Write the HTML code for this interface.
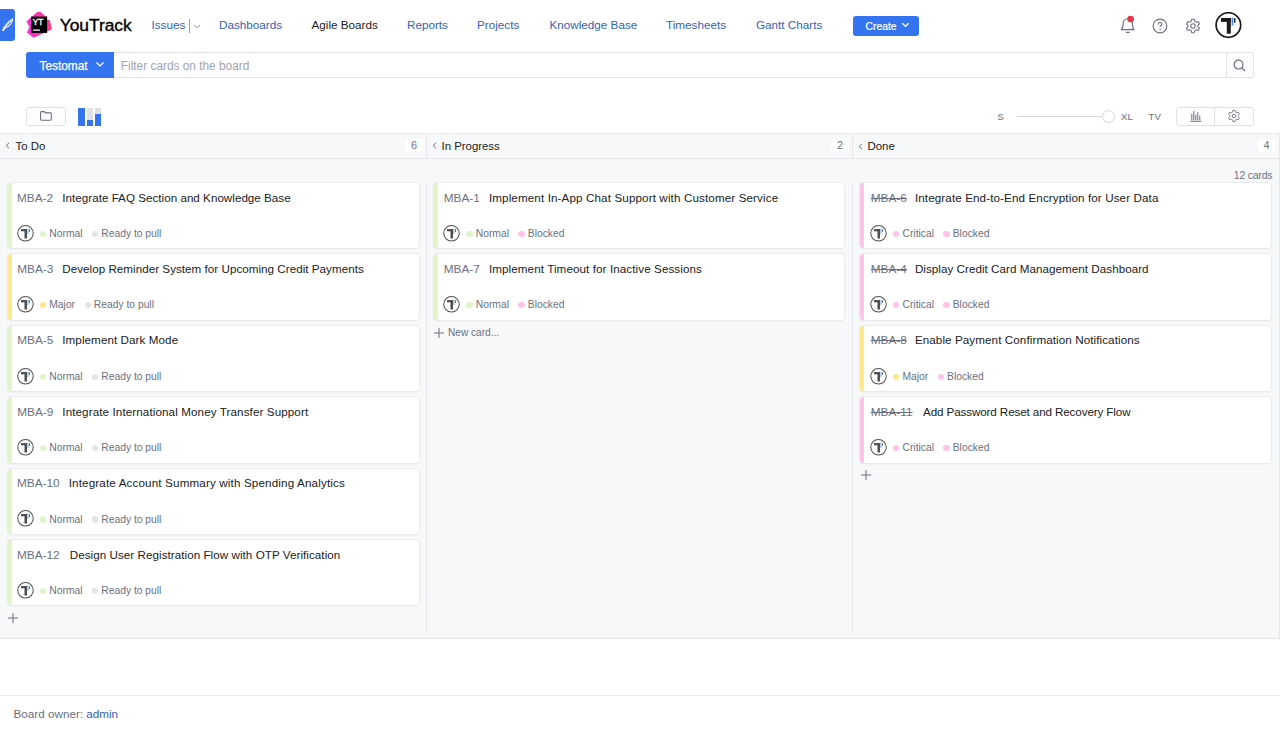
<!DOCTYPE html>
<html><head><meta charset="utf-8">
<style>
*{box-sizing:border-box;margin:0;padding:0}
html,body{width:1280px;height:734px;overflow:hidden;background:#fff;font-family:"Liberation Sans",sans-serif;color:#1f2023}
.abs{position:absolute}
.nav{position:absolute;top:17px;font-size:11.7px;line-height:16px;color:#3462b4;white-space:nowrap}
.btn-blue{background:#3574f0;color:#fff}
#board{position:absolute;left:0;top:133px;width:1280px;height:506px;background:#f7f8fa;border-top:1px solid #ebecf0;border-bottom:1px solid #e4e6ea}
.colhead{position:absolute;top:0;height:25px;border-bottom:1px solid #e4e6ea}
.sep{position:absolute;width:1px;background:#e6e7eb}
.card{position:absolute;width:410.6px;height:65.4px;background:#fff;border-radius:3.5px;box-shadow:0 0 0 1px #e9eaee,0 1px 2px rgba(0,0,0,.08);overflow:hidden}
.card .bar{position:absolute;left:0;top:0;bottom:0;width:4px}
.card .id{position:absolute;top:6.5px;line-height:16px;white-space:nowrap;font-size:11.8px;color:#6c7080}
.card .title{position:absolute;top:6.5px;line-height:16px;white-space:nowrap;font-size:11.65px;color:#202124}
.card .meta{position:absolute;top:44px;left:32px;font-size:10.3px;line-height:14px;color:#6c7080;white-space:nowrap}
.chev{position:absolute;top:8.5px}
.ctitle{position:absolute;top:4px;font-size:11.4px;line-height:16px;color:#202124;white-space:nowrap}
.badge{position:absolute;top:5.2px;width:18px;height:13px;background:#fff;border-radius:2px;font-size:10.9px;line-height:12.4px;text-align:center;color:#6c7080}
.plus{position:absolute;width:10px;height:10px}
.dot{display:inline-block;width:6.3px;height:6.3px;border-radius:50%;margin-right:3px;vertical-align:0px}
.av{position:absolute;left:9px;top:41.9px;width:17px;height:17px}
.g{background:#e0f3c9}.y{background:#fee58c}.p{background:#fec4e8}.gr{background:#e3e4e7}
.bg{background:#e3f4cb}.by{background:#ffe98c}.bp{background:#ffc3e6}
</style></head><body>

<!-- left blue tab -->
<div class="abs" style="left:-4px;top:9px;width:19px;height:32px;background:#3574f0;border-radius:3px"></div>
<svg class="abs" style="left:0;top:16px" width="15" height="18" viewBox="0 0 15 18">
 <path d="M2.6 14.4 C4 11.5 7.5 6 12.6 2.9 C13 6 10 10.5 5.2 11.6 L3.2 14.6 Z" fill="none" stroke="#fff" stroke-width="1.1" stroke-linejoin="round"/>
 <path d="M3.4 13.2 L11.5 4.5" stroke="#fff" stroke-width="0.9"/>
</svg>

<!-- YT logo -->
<svg class="abs" style="left:24px;top:10px" width="30" height="30" viewBox="0 0 30 30">
 <defs><linearGradient id="lg" x1="0" y1="0" x2="1" y2="0"><stop offset="0" stop-color="#f72fe0"/><stop offset="1" stop-color="#ff3a7e"/></linearGradient></defs>
 <path d="M2.4 11.5 L12 3 C13.6 1.6 16.2 1.4 18 3 L21.5 6.6 L23.1 6.6 L23.1 9.7 L25.7 9.7 L28 19.3 L9.6 27.8 L2.9 22.4 L5.5 16.7 Z" fill="url(#lg)"/>
 <rect x="7" y="6.6" width="16.1" height="16.3" fill="#000"/>
 <text x="8.5" y="15.2" font-family="Liberation Sans" font-size="9" fill="#fff" stroke="#fff" stroke-width="0.3" letter-spacing="-0.5">YT</text>
 <rect x="9.1" y="19.5" width="6.8" height="1.3" fill="#fff"/>
</svg>
<div class="abs" style="left:59.8px;top:14px;font-size:17.4px;line-height:22px;color:#000;-webkit-text-stroke:0.35px #000;letter-spacing:-0.05px;white-space:nowrap">YouTrack</div>

<div class="nav" style="left:151.5px">Issues</div>
<div class="abs" style="left:189px;top:19.4px;width:1px;height:14px;background:#9a9da6"></div>
<svg class="abs" style="left:193px;top:24.2px" width="8" height="5" viewBox="0 0 8 5"><path d="M1 1 L4 3.8 L7 1" fill="none" stroke="#9a9da6" stroke-width="1"/></svg>
<div class="nav" style="left:219px">Dashboards</div>
<div class="nav" style="left:311.5px;color:#1f2023">Agile Boards</div>
<div class="nav" style="left:407px">Reports</div>
<div class="nav" style="left:477px">Projects</div>
<div class="nav" style="left:549.5px">Knowledge Base</div>
<div class="nav" style="left:666px">Timesheets</div>
<div class="nav" style="left:756px">Gantt Charts</div>
<div class="abs btn-blue" style="left:852.5px;top:16px;width:66px;height:19.5px;border-radius:3px"></div>
<div class="abs" style="left:865.6px;top:19px;font-size:10.3px;line-height:16px;color:#fff;-webkit-text-stroke:0.2px #fff">Create</div>
<svg class="abs" style="left:901px;top:22.3px" width="9" height="6" viewBox="0 0 9 6"><path d="M1.2 1.2 L4.5 4.3 L7.8 1.2" fill="none" stroke="#fff" stroke-width="1.3"/></svg>

<!-- right header icons -->
<svg class="abs" style="left:1118px;top:14px" width="20" height="22" viewBox="0 0 20 22">
 <path d="M3.4 15.6 H16.1 C15.1 14.6 14.4 13 14.4 10.2 V9.6 C14.4 6.6 12.5 4.7 9.75 4.7 C7 4.7 5.1 6.6 5.1 9.6 V10.2 C5.1 13 4.4 14.6 3.4 15.6 Z" fill="none" stroke="#6c7080" stroke-width="1.15" stroke-linejoin="round"/>
 <path d="M8.3 18.3 H11.2" stroke="#6c7080" stroke-width="1.15" stroke-linecap="round"/>
 <circle cx="12.6" cy="5" r="3.35" fill="#e5364a"/>
</svg>
<svg class="abs" style="left:1151.2px;top:16.7px" width="18" height="18" viewBox="0 0 18 18">
 <circle cx="9" cy="9" r="6.85" fill="none" stroke="#6c7080" stroke-width="1.15"/>
 <path d="M7.1 7.4 C7.1 6.2 8 5.5 9 5.5 C10.1 5.5 10.9 6.2 10.9 7.2 C10.9 8.5 9.1 8.6 9.1 10.1" fill="none" stroke="#6c7080" stroke-width="1.15"/>
 <circle cx="9.1" cy="12.2" r="0.75" fill="#6c7080"/>
</svg>
<svg class="abs" style="left:1183.7px;top:16.8px" width="18" height="18" viewBox="0 0 18 18">
 <g transform="translate(9 9) scale(0.93) translate(-9 -9)">
 <path id="gearp" d="M7.6 1.8 H10.4 L10.9 4 L12.5 4.9 L14.6 4.2 L16 6.6 L14.4 8.1 V9.9 L16 11.4 L14.6 13.8 L12.5 13.1 L10.9 14 L10.4 16.2 H7.6 L7.1 14 L5.5 13.1 L3.4 13.8 L2 11.4 L3.6 9.9 V8.1 L2 6.6 L3.4 4.2 L5.5 4.9 L7.1 4 Z" fill="none" stroke="#6c7080" stroke-width="1.15" stroke-linejoin="round"/>
 <circle cx="9" cy="9" r="2.4" fill="none" stroke="#6c7080" stroke-width="1.15"/>
 </g>
</svg>
<svg class="abs" style="left:1215px;top:12px" width="27" height="27" viewBox="0 0 27 27">
 <circle cx="13.4" cy="13" r="12.3" fill="#fff" stroke="#1a1a1a" stroke-width="1.7"/>
 <rect x="6" y="6" width="10" height="3.9" fill="#1a1a1a"/>
 <rect x="11.8" y="6" width="4" height="15.7" fill="#1a1a1a"/>
 <rect x="16.6" y="5.6" width="1.8" height="7.9" fill="#4d86f5"/>
 <rect x="19.1" y="6.1" width="1.4" height="4.6" fill="#1a1a1a"/>
</svg>

<!-- search row -->
<div class="abs btn-blue" style="left:26px;top:52.4px;width:88.2px;height:25.4px;border-radius:3px 0 0 3px"></div>
<div class="abs" style="left:39.5px;top:58px;font-size:11.85px;line-height:16px;color:#fff;-webkit-text-stroke:0.25px #fff">Testomat</div>
<svg class="abs" style="left:95px;top:61px" width="10" height="7" viewBox="0 0 10 7"><path d="M1.5 1.5 L5 5 L8.5 1.5" fill="none" stroke="#fff" stroke-width="1.2"/></svg>
<div class="abs" style="left:114px;top:52px;width:1139.6px;height:26px;border:1px solid #e0e2e7;border-left:none;border-radius:0 3px 3px 0"></div>
<div class="abs" style="left:1226px;top:53px;width:1px;height:24px;background:#e0e2e7"></div>
<div class="abs" style="left:120.8px;top:57.5px;font-size:11.87px;line-height:16px;color:#a0a4b0">Filter cards on the board</div>
<svg class="abs" style="left:1232px;top:58px" width="15" height="15" viewBox="0 0 15 15">
 <circle cx="6.6" cy="6.6" r="4.4" fill="none" stroke="#6c7080" stroke-width="1.2"/>
 <path d="M9.8 9.8 L13 13" stroke="#6c7080" stroke-width="1.3"/>
</svg>

<!-- toolbar -->
<div class="abs" style="left:26px;top:107px;width:39.5px;height:19px;border:1px solid #dfe1e5;border-radius:3px"></div>
<svg class="abs" style="left:39px;top:110px" width="14" height="12" viewBox="0 0 14 12">
 <path d="M1.6 2.5 C1.6 2 2 1.6 2.5 1.6 H5.3 L6.5 2.9 H11.4 C11.9 2.9 12.3 3.3 12.3 3.8 V9.3 C12.3 9.8 11.9 10.2 11.4 10.2 H2.5 C2 10.2 1.6 9.8 1.6 9.3 Z" fill="none" stroke="#6c7080" stroke-width="1.1"/>
</svg>
<div class="abs" style="left:78px;top:108px;width:7px;height:18px;background:#3574f0"></div>
<div class="abs" style="left:86.5px;top:108px;width:6.5px;height:11.5px;background:#dfe1e5"></div>
<div class="abs" style="left:86.5px;top:119.5px;width:6.5px;height:6.5px;background:#3574f0"></div>
<div class="abs" style="left:94.8px;top:108px;width:6.7px;height:6px;background:#dfe1e5"></div>
<div class="abs" style="left:94.8px;top:114px;width:6.7px;height:12px;background:#3574f0"></div>

<div class="abs" style="left:997.5px;top:109.6px;font-size:9.6px;line-height:14px;color:#6c7080">S</div>
<div class="abs" style="left:1017px;top:116px;width:86px;height:1px;background:#d5d7dc"></div>
<div class="abs" style="left:1101.5px;top:110.2px;width:13px;height:13px;border-radius:50%;background:#fff;border:1px solid #d3d5db"></div>
<div class="abs" style="left:1121px;top:109.6px;font-size:9.6px;line-height:14px;color:#6c7080">XL</div>
<div class="abs" style="left:1148.6px;top:109.6px;font-size:9.6px;line-height:14px;color:#6c7080">TV</div>
<div class="abs" style="left:1176px;top:107px;width:77.5px;height:19px;border:1px solid #dfe1e5;border-radius:3px"></div>
<div class="abs" style="left:1214px;top:107px;width:1px;height:19px;background:#dfe1e5"></div>
<svg class="abs" style="left:1189px;top:110px" width="13" height="13" viewBox="0 0 13 13">
 <path d="M1.3 11.3 H12.3 M2.8 10.2 V4 M4.8 10.2 V1 M6.8 10.2 V4.8 M8.8 10.2 V2.2 M10.8 10.2 V5.8" stroke="#6c7080" stroke-width="1"/>
</svg>
<svg class="abs" style="left:1227px;top:109px" width="14" height="14" viewBox="0 0 18 18">
 <use href="#gearp"/>
 <circle cx="9" cy="9" r="2.3" fill="none" stroke="#6c7080" stroke-width="1.1"/>
</svg>

<!-- board -->
<div id="board">
 <div class="colhead" style="left:0;width:426px"></div>
 <div class="colhead" style="left:426px;width:426.5px;border-left:1px solid #e6e7eb"></div>
 <div class="colhead" style="left:852px;width:427px;border-left:1px solid #e6e7eb"></div>
 <svg class="chev" style="left:5.3px;top:8px" width="5" height="7" viewBox="0 0 5 7"><path d="M4 0.8 L1.2 3.5 L4 6.2" fill="none" stroke="#6c7080" stroke-width="1"/></svg>
 <div class="ctitle" style="left:15.5px">To Do</div>
 <div class="badge" style="left:405px">6</div>
 <svg class="chev" style="left:431.5px;top:8px" width="5" height="7" viewBox="0 0 5 7"><path d="M4 0.8 L1.2 3.5 L4 6.2" fill="none" stroke="#6c7080" stroke-width="1"/></svg>
 <div class="ctitle" style="left:441.5px">In Progress</div>
 <div class="badge" style="left:831px">2</div>
 <svg class="chev" style="left:857.5px" width="5" height="7" viewBox="0 0 5 7"><path d="M4 0.8 L1.2 3.5 L4 6.2" fill="none" stroke="#6c7080" stroke-width="1"/></svg>
 <div class="ctitle" style="left:867.5px">Done</div>
 <div class="badge" style="left:1257.5px">4</div>
 <div class="abs" style="left:1233.8px;top:34.7px;font-size:10.4px;letter-spacing:-0.17px;line-height:14px;color:#6c7080;white-space:nowrap">12 cards</div>
 <div class="sep" style="left:426px;top:48.5px;height:448px"></div>
 <div class="sep" style="left:852px;top:48.5px;height:448px"></div>
 <div class="sep" style="left:1278.5px;top:0;height:505px;background:#e6e7eb"></div>
 <svg class="plus" style="left:7.5px;top:478.5px" viewBox="0 0 10 10"><path d="M5 0 V10 M0 5 H10" stroke="#6c7080" stroke-width="1"/></svg>
 <svg class="plus" style="left:434px;top:193.5px" viewBox="0 0 10 10"><path d="M5 0 V10 M0 5 H10" stroke="#6c7080" stroke-width="1"/></svg>
 <div class="abs" style="left:448px;top:191.5px;font-size:10.1px;line-height:14px;color:#6c7080;white-space:nowrap">New card...</div>
 <svg class="plus" style="left:860.5px;top:335.5px" viewBox="0 0 10 10"><path d="M5 0 V10 M0 5 H10" stroke="#6c7080" stroke-width="1"/></svg>
</div>
<div class="card" style="left:8.0px;top:183.0px"><div class="bar bg"></div><span class="id" style="left:9.00px;">MBA-2</span><span class="title" style="left:54.30px;letter-spacing:0.015px">Integrate FAQ Section and Knowledge Base</span><div style="position:absolute;left:0px;top:0;width:200px;height:65px"><svg class="av" viewBox="0 0 17 17"><circle cx="8.5" cy="8.3" r="7.75" fill="#fff" stroke="#505050" stroke-width="1.05"/><rect x="4" y="4.1" width="6" height="2.2" fill="#4e4e4e"/><rect x="7.5" y="4.1" width="2.5" height="9.4" fill="#4e4e4e"/><rect x="10.1" y="3.6" width="1.7" height="5.3" fill="#a9c6fa"/><rect x="12.1" y="4.3" width="0.9" height="2.5" fill="#4e4e4e"/></svg><div class="meta"><span class="dot g"></span>Normal<span class="dot gr" style="margin-left:9.5px"></span>Ready to pull</div></div></div>
<div class="card" style="left:8.0px;top:254.4px"><div class="bar by"></div><span class="id" style="left:9.20px;">MBA-3</span><span class="title" style="left:54.30px;letter-spacing:0.024px">Develop Reminder System for Upcoming Credit Payments</span><div style="position:absolute;left:0px;top:0;width:200px;height:65px"><svg class="av" viewBox="0 0 17 17"><circle cx="8.5" cy="8.3" r="7.75" fill="#fff" stroke="#505050" stroke-width="1.05"/><rect x="4" y="4.1" width="6" height="2.2" fill="#4e4e4e"/><rect x="7.5" y="4.1" width="2.5" height="9.4" fill="#4e4e4e"/><rect x="10.1" y="3.6" width="1.7" height="5.3" fill="#a9c6fa"/><rect x="12.1" y="4.3" width="0.9" height="2.5" fill="#4e4e4e"/></svg><div class="meta"><span class="dot y"></span>Major<span class="dot gr" style="margin-left:9.5px"></span>Ready to pull</div></div></div>
<div class="card" style="left:8.0px;top:325.8px"><div class="bar bg"></div><span class="id" style="left:9.20px;">MBA-5</span><span class="title" style="left:54.30px;letter-spacing:0.072px">Implement Dark Mode</span><div style="position:absolute;left:0px;top:0;width:200px;height:65px"><svg class="av" viewBox="0 0 17 17"><circle cx="8.5" cy="8.3" r="7.75" fill="#fff" stroke="#505050" stroke-width="1.05"/><rect x="4" y="4.1" width="6" height="2.2" fill="#4e4e4e"/><rect x="7.5" y="4.1" width="2.5" height="9.4" fill="#4e4e4e"/><rect x="10.1" y="3.6" width="1.7" height="5.3" fill="#a9c6fa"/><rect x="12.1" y="4.3" width="0.9" height="2.5" fill="#4e4e4e"/></svg><div class="meta"><span class="dot g"></span>Normal<span class="dot gr" style="margin-left:9.5px"></span>Ready to pull</div></div></div>
<div class="card" style="left:8.0px;top:397.2px"><div class="bar bg"></div><span class="id" style="left:9.20px;">MBA-9</span><span class="title" style="left:54.30px;letter-spacing:0.100px">Integrate International Money Transfer Support</span><div style="position:absolute;left:0px;top:0;width:200px;height:65px"><svg class="av" viewBox="0 0 17 17"><circle cx="8.5" cy="8.3" r="7.75" fill="#fff" stroke="#505050" stroke-width="1.05"/><rect x="4" y="4.1" width="6" height="2.2" fill="#4e4e4e"/><rect x="7.5" y="4.1" width="2.5" height="9.4" fill="#4e4e4e"/><rect x="10.1" y="3.6" width="1.7" height="5.3" fill="#a9c6fa"/><rect x="12.1" y="4.3" width="0.9" height="2.5" fill="#4e4e4e"/></svg><div class="meta"><span class="dot g"></span>Normal<span class="dot gr" style="margin-left:9.5px"></span>Ready to pull</div></div></div>
<div class="card" style="left:8.0px;top:468.6px"><div class="bar bg"></div><span class="id" style="left:9.00px;">MBA-10</span><span class="title" style="left:60.70px;letter-spacing:0.144px">Integrate Account Summary with Spending Analytics</span><div style="position:absolute;left:0px;top:0;width:200px;height:65px"><svg class="av" viewBox="0 0 17 17"><circle cx="8.5" cy="8.3" r="7.75" fill="#fff" stroke="#505050" stroke-width="1.05"/><rect x="4" y="4.1" width="6" height="2.2" fill="#4e4e4e"/><rect x="7.5" y="4.1" width="2.5" height="9.4" fill="#4e4e4e"/><rect x="10.1" y="3.6" width="1.7" height="5.3" fill="#a9c6fa"/><rect x="12.1" y="4.3" width="0.9" height="2.5" fill="#4e4e4e"/></svg><div class="meta"><span class="dot g"></span>Normal<span class="dot gr" style="margin-left:9.5px"></span>Ready to pull</div></div></div>
<div class="card" style="left:8.0px;top:540.0px"><div class="bar bg"></div><span class="id" style="left:9.00px;">MBA-12</span><span class="title" style="left:61.70px;letter-spacing:0.046px">Design User Registration Flow with OTP Verification</span><div style="position:absolute;left:0px;top:0;width:200px;height:65px"><svg class="av" viewBox="0 0 17 17"><circle cx="8.5" cy="8.3" r="7.75" fill="#fff" stroke="#505050" stroke-width="1.05"/><rect x="4" y="4.1" width="6" height="2.2" fill="#4e4e4e"/><rect x="7.5" y="4.1" width="2.5" height="9.4" fill="#4e4e4e"/><rect x="10.1" y="3.6" width="1.7" height="5.3" fill="#a9c6fa"/><rect x="12.1" y="4.3" width="0.9" height="2.5" fill="#4e4e4e"/></svg><div class="meta"><span class="dot g"></span>Normal<span class="dot gr" style="margin-left:9.5px"></span>Ready to pull</div></div></div>
<div class="card" style="left:433.8px;top:183.0px"><div class="bar bg"></div><span class="id" style="left:10.00px;">MBA-1</span><span class="title" style="left:55.10px;letter-spacing:0.118px">Implement In-App Chat Support with Customer Service</span><div style="position:absolute;left:0.7px;top:0;width:200px;height:65px"><svg class="av" viewBox="0 0 17 17"><circle cx="8.5" cy="8.3" r="7.75" fill="#fff" stroke="#505050" stroke-width="1.05"/><rect x="4" y="4.1" width="6" height="2.2" fill="#4e4e4e"/><rect x="7.5" y="4.1" width="2.5" height="9.4" fill="#4e4e4e"/><rect x="10.1" y="3.6" width="1.7" height="5.3" fill="#a9c6fa"/><rect x="12.1" y="4.3" width="0.9" height="2.5" fill="#4e4e4e"/></svg><div class="meta"><span class="dot g"></span>Normal<span class="dot p" style="margin-left:9.5px"></span>Blocked</div></div></div>
<div class="card" style="left:433.8px;top:254.4px"><div class="bar bg"></div><span class="id" style="left:10.00px;">MBA-7</span><span class="title" style="left:55.10px;letter-spacing:0.089px">Implement Timeout for Inactive Sessions</span><div style="position:absolute;left:0.7px;top:0;width:200px;height:65px"><svg class="av" viewBox="0 0 17 17"><circle cx="8.5" cy="8.3" r="7.75" fill="#fff" stroke="#505050" stroke-width="1.05"/><rect x="4" y="4.1" width="6" height="2.2" fill="#4e4e4e"/><rect x="7.5" y="4.1" width="2.5" height="9.4" fill="#4e4e4e"/><rect x="10.1" y="3.6" width="1.7" height="5.3" fill="#a9c6fa"/><rect x="12.1" y="4.3" width="0.9" height="2.5" fill="#4e4e4e"/></svg><div class="meta"><span class="dot g"></span>Normal<span class="dot p" style="margin-left:9.5px"></span>Blocked</div></div></div>
<div class="card" style="left:860.4px;top:183.0px"><div class="bar bp"></div><span class="id" style="left:10.40px;text-decoration:line-through;">MBA-6</span><span class="title" style="left:54.50px;letter-spacing:0.109px">Integrate End-to-End Encryption for User Data</span><div style="position:absolute;left:0.8px;top:0;width:200px;height:65px"><svg class="av" viewBox="0 0 17 17"><circle cx="8.5" cy="8.3" r="7.75" fill="#fff" stroke="#505050" stroke-width="1.05"/><rect x="4" y="4.1" width="6" height="2.2" fill="#4e4e4e"/><rect x="7.5" y="4.1" width="2.5" height="9.4" fill="#4e4e4e"/><rect x="10.1" y="3.6" width="1.7" height="5.3" fill="#a9c6fa"/><rect x="12.1" y="4.3" width="0.9" height="2.5" fill="#4e4e4e"/></svg><div class="meta"><span class="dot p"></span>Critical<span class="dot p" style="margin-left:9.5px"></span>Blocked</div></div></div>
<div class="card" style="left:860.4px;top:254.4px"><div class="bar bp"></div><span class="id" style="left:10.40px;text-decoration:line-through;">MBA-4</span><span class="title" style="left:54.50px;letter-spacing:0.036px">Display Credit Card Management Dashboard</span><div style="position:absolute;left:0.8px;top:0;width:200px;height:65px"><svg class="av" viewBox="0 0 17 17"><circle cx="8.5" cy="8.3" r="7.75" fill="#fff" stroke="#505050" stroke-width="1.05"/><rect x="4" y="4.1" width="6" height="2.2" fill="#4e4e4e"/><rect x="7.5" y="4.1" width="2.5" height="9.4" fill="#4e4e4e"/><rect x="10.1" y="3.6" width="1.7" height="5.3" fill="#a9c6fa"/><rect x="12.1" y="4.3" width="0.9" height="2.5" fill="#4e4e4e"/></svg><div class="meta"><span class="dot p"></span>Critical<span class="dot p" style="margin-left:9.5px"></span>Blocked</div></div></div>
<div class="card" style="left:860.4px;top:325.8px"><div class="bar by"></div><span class="id" style="left:10.40px;text-decoration:line-through;">MBA-8</span><span class="title" style="left:54.50px;letter-spacing:0.085px">Enable Payment Confirmation Notifications</span><div style="position:absolute;left:0.8px;top:0;width:200px;height:65px"><svg class="av" viewBox="0 0 17 17"><circle cx="8.5" cy="8.3" r="7.75" fill="#fff" stroke="#505050" stroke-width="1.05"/><rect x="4" y="4.1" width="6" height="2.2" fill="#4e4e4e"/><rect x="7.5" y="4.1" width="2.5" height="9.4" fill="#4e4e4e"/><rect x="10.1" y="3.6" width="1.7" height="5.3" fill="#a9c6fa"/><rect x="12.1" y="4.3" width="0.9" height="2.5" fill="#4e4e4e"/></svg><div class="meta"><span class="dot y"></span>Major<span class="dot p" style="margin-left:9.5px"></span>Blocked</div></div></div>
<div class="card" style="left:860.4px;top:397.2px"><div class="bar bp"></div><span class="id" style="left:10.40px;text-decoration:line-through;">MBA-11</span><span class="title" style="left:62.70px;letter-spacing:-0.117px">Add Password Reset and Recovery Flow</span><div style="position:absolute;left:0.8px;top:0;width:200px;height:65px"><svg class="av" viewBox="0 0 17 17"><circle cx="8.5" cy="8.3" r="7.75" fill="#fff" stroke="#505050" stroke-width="1.05"/><rect x="4" y="4.1" width="6" height="2.2" fill="#4e4e4e"/><rect x="7.5" y="4.1" width="2.5" height="9.4" fill="#4e4e4e"/><rect x="10.1" y="3.6" width="1.7" height="5.3" fill="#a9c6fa"/><rect x="12.1" y="4.3" width="0.9" height="2.5" fill="#4e4e4e"/></svg><div class="meta"><span class="dot p"></span>Critical<span class="dot p" style="margin-left:9.5px"></span>Blocked</div></div></div>

<!-- footer -->
<div class="abs" style="left:0;top:695px;width:1280px;height:1px;background:#ebecf0"></div>
<div class="abs" style="left:13.5px;top:706px;font-size:11.7px;line-height:16px;color:#6c7080;white-space:nowrap">Board owner: <span style="color:#3462b4">admin</span></div>

</body></html>
